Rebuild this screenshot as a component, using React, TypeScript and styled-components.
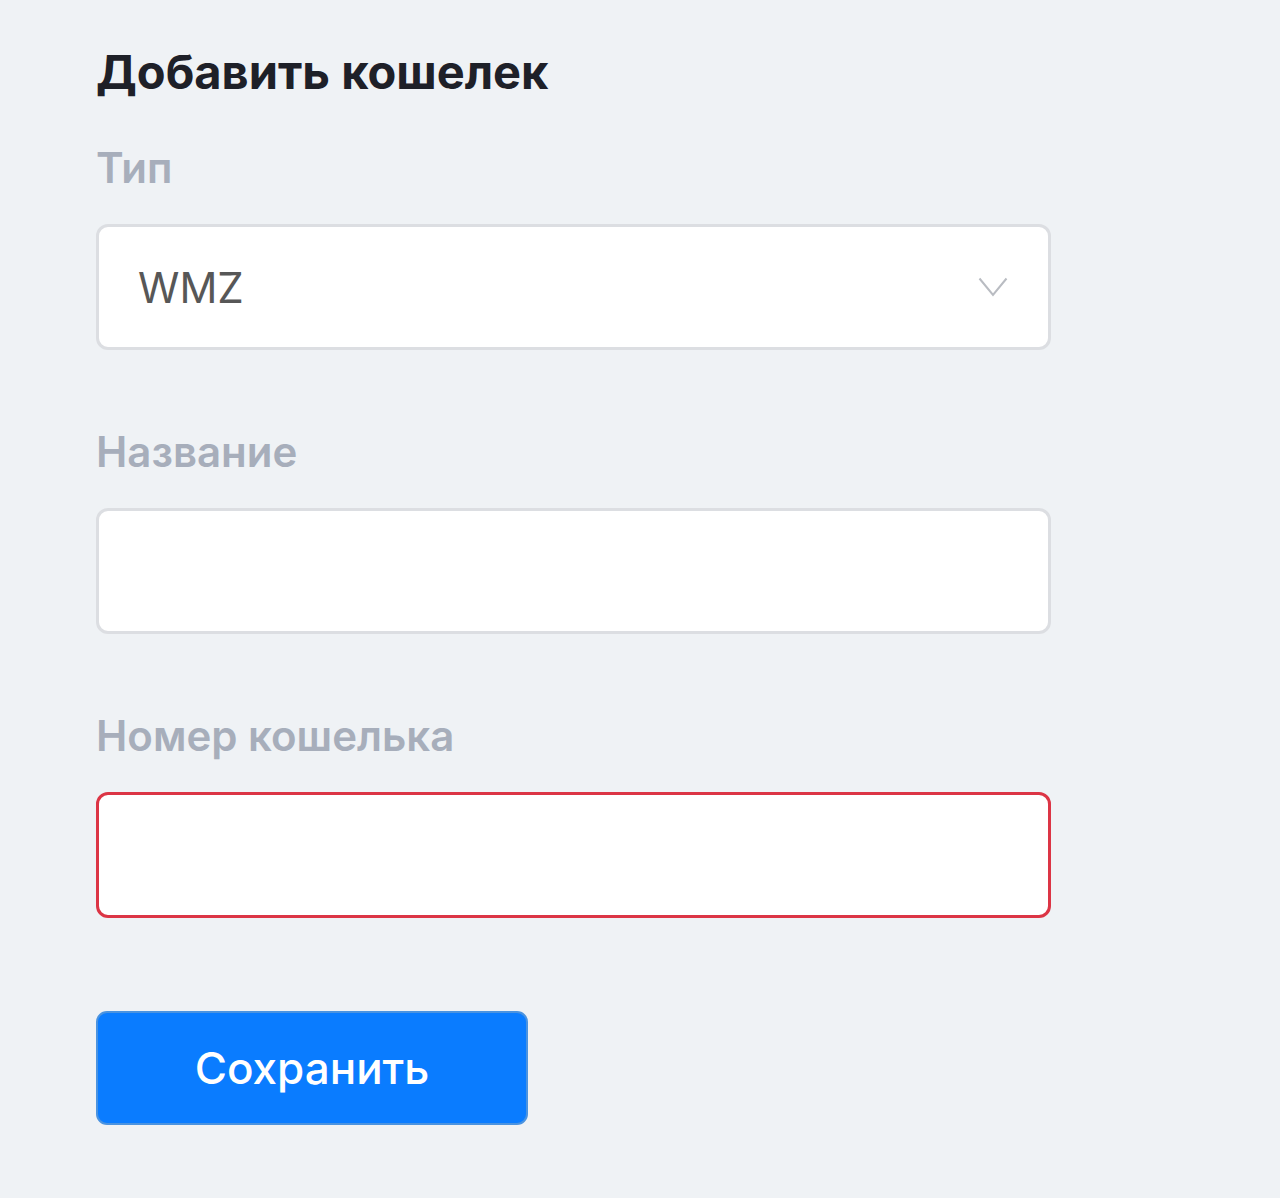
import React from 'react';
import styled, { createGlobalStyle } from 'styled-components';

const GlobalStyle = createGlobalStyle`
  html, body {
    margin: 0;
    padding: 0;
    background: #eff2f5;
    font-family: Inter, "Noto Sans", "Liberation Sans", sans-serif;
  }
`;

const Page = styled.div`
  min-height: 1198px;
  box-sizing: border-box;
  padding: 44px 0 0 96px;
  background: #eff2f5;
`;

const Form = styled.form`
  width: 955px;
  display: flex;
  flex-direction: column;
`;

const Title = styled.h1`
  margin: 0 0 43px;
  font-size: 47px;
  line-height: 56px;
  font-weight: 700;
  color: #1e2028;
`;

const Field = styled.div<{ $last?: boolean }>`
  display: flex;
  flex-direction: column;
  margin-bottom: ${(p) => (p.$last ? '93px' : '77px')};
`;

const Label = styled.label`
  font-size: 42px;
  line-height: 50px;
  font-weight: 600;
  color: #a7aebb;
  margin-bottom: 31px;
`;

const Box = styled.div<{ $error?: boolean }>`
  position: relative;
  height: 126px;
  box-sizing: border-box;
  background: #fff;
  border: 3px solid ${(p) => (p.$error ? '#dc3545' : '#dcdee2')};
  border-radius: 12px;
  display: flex;
  align-items: center;
`;

const Input = styled.input`
  flex: 1;
  height: 100%;
  border: none;
  outline: none;
  background: transparent;
  padding: 0 39px;
  font-family: inherit;
  font-size: 42px;
  color: #555;
  border-radius: 12px;
`;

const SelectValue = styled.div`
  flex: 1;
  padding: 0 39px;
  font-size: 42px;
  color: #575757;
`;

const Chevron = styled.svg`
  width: 30px;
  height: 20px;
  margin-right: 40px;
`;

const SaveButton = styled.button`
  width: 432px;
  height: 114px;
  box-sizing: border-box;
  background: #0a7cff;
  border: 2px solid #4a93e0;
  border-radius: 11px;
  color: #fff;
  font-family: inherit;
  font-size: 44px;
  font-weight: 500;
  cursor: pointer;
`;

function App() {
  return (
    <Page>
      <GlobalStyle />
      <Form onSubmit={(e) => e.preventDefault()}>
        <Title>Добавить кошелек</Title>

        <Field>
          <Label>Тип</Label>
          <Box>
            <SelectValue>WMZ</SelectValue>
            <Chevron viewBox="0 0 30 20" fill="none">
              <path d="M1.5 1.5 L15 18 L28.5 1.5" stroke="#b9bcc2" strokeWidth="2" />
            </Chevron>
          </Box>
        </Field>

        <Field>
          <Label>Название</Label>
          <Box>
            <Input type="text" />
          </Box>
        </Field>

        <Field $last>
          <Label>Номер кошелька</Label>
          <Box $error>
            <Input type="text" />
          </Box>
        </Field>

        <div>
          <SaveButton type="submit">Сохранить</SaveButton>
        </div>
      </Form>
    </Page>
  );
}

export default App;
